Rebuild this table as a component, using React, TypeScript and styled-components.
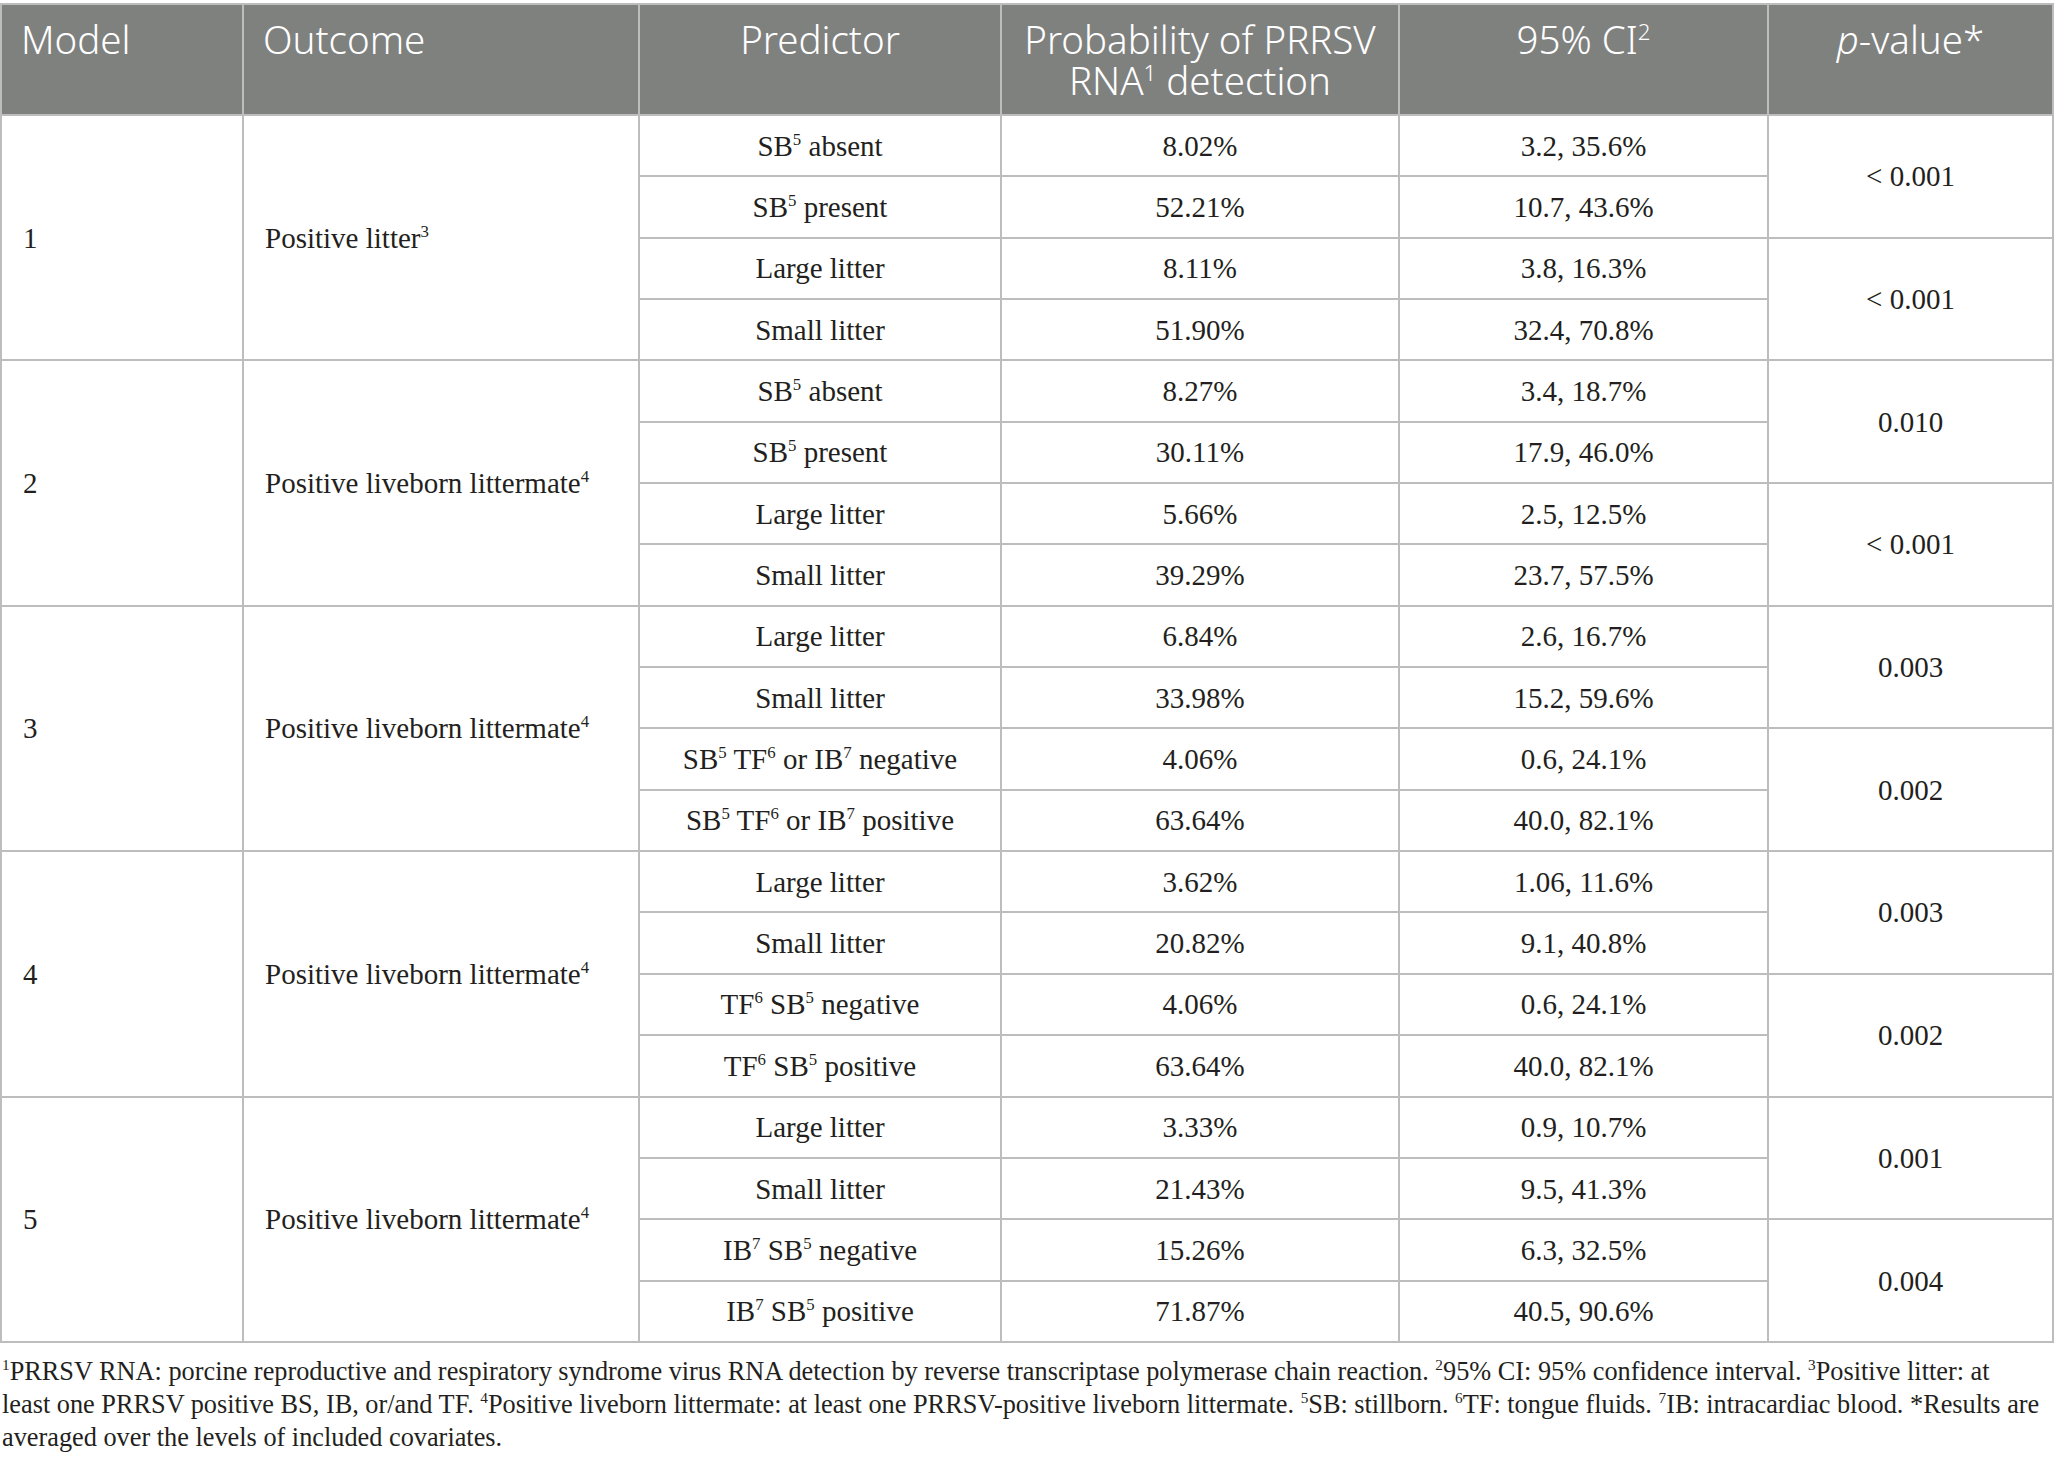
import React from "react";
import styled, { createGlobalStyle } from "styled-components";

const GlobalStyle = createGlobalStyle`
  html, body {
    margin: 0;
    padding: 0;
    background: #ffffff;
  }
  body {
    font-family: "Liberation Serif", "Times New Roman", serif;
    color: #231f20;
  }
`;

const Page = styled.div`
  width: 2055px;
  padding-top: 3px;
`;

const Table = styled.table`
  width: 2054px;
  border-collapse: collapse;
  table-layout: fixed;
  border: 2px solid #bdbdbd;
`;

const HeadRow = styled.tr`
  height: 111px;
  background: #7f817f;
`;

const HeadCell = styled.th<{ $align?: "left" | "center" }>`
  vertical-align: top;
  padding: 14px ${(p) => (p.$align === "left" ? "20px 0 19px" : "2px 0 2px")};
  text-align: ${(p) => p.$align || "center"};
  font-family: "Noto Sans", "Open Sans", sans-serif;
  font-weight: 300;
  font-size: 38.5px;
  line-height: 41px;
  color: #ffffff;
  border: 2px solid #bdbdbd;
  border-top: none;
  white-space: nowrap;
`;

const Row = styled.tr`
  height: 61.35px;
`;

const Cell = styled.td<{ $align?: "left" | "center" }>`
  padding: 0 ${(p) => (p.$align === "left" ? "10px 0 21px" : "6px")};
  text-align: ${(p) => p.$align || "center"};
  vertical-align: middle;
  font-size: 29px;
  line-height: 32px;
  border: 2px solid #bdbdbd;
  white-space: nowrap;
`;

const Sup = styled.sup`
  font-size: 0.58em;
  vertical-align: super;
  line-height: 0;
`;

const Italic = styled.i`
  font-style: italic;
`;

const Notes = styled.div`
  margin-top: 12px;
  padding: 0 6px 0 2px;
  font-size: 26.3px;
  line-height: 33px;
`;

const NoteLine = styled.div`
  white-space: nowrap;
`;

// "^5" -> superscript 5
function Txt({ s }: { s: string }) {
  const parts = s.split(/\^(\d)/);
  return (
    <>
      {parts.map((p, i) => (i % 2 ? <Sup key={i}>{p}</Sup> : <React.Fragment key={i}>{p}</React.Fragment>))}
    </>
  );
}

type Group = {
  model: string;
  outcome: string;
  rows: [string, string, string][];
  p: [string, string];
};

const groups: Group[] = [
  {
    model: "1",
    outcome: "Positive litter^3",
    rows: [
      ["SB^5 absent", "8.02%", "3.2, 35.6%"],
      ["SB^5 present", "52.21%", "10.7, 43.6%"],
      ["Large litter", "8.11%", "3.8, 16.3%"],
      ["Small litter", "51.90%", "32.4, 70.8%"],
    ],
    p: ["< 0.001", "< 0.001"],
  },
  {
    model: "2",
    outcome: "Positive liveborn littermate^4",
    rows: [
      ["SB^5 absent", "8.27%", "3.4, 18.7%"],
      ["SB^5 present", "30.11%", "17.9, 46.0%"],
      ["Large litter", "5.66%", "2.5, 12.5%"],
      ["Small litter", "39.29%", "23.7, 57.5%"],
    ],
    p: ["0.010", "< 0.001"],
  },
  {
    model: "3",
    outcome: "Positive liveborn littermate^4",
    rows: [
      ["Large litter", "6.84%", "2.6, 16.7%"],
      ["Small litter", "33.98%", "15.2, 59.6%"],
      ["SB^5 TF^6 or IB^7 negative", "4.06%", "0.6, 24.1%"],
      ["SB^5 TF^6 or IB^7 positive", "63.64%", "40.0, 82.1%"],
    ],
    p: ["0.003", "0.002"],
  },
  {
    model: "4",
    outcome: "Positive liveborn littermate^4",
    rows: [
      ["Large litter", "3.62%", "1.06, 11.6%"],
      ["Small litter", "20.82%", "9.1, 40.8%"],
      ["TF^6 SB^5 negative", "4.06%", "0.6, 24.1%"],
      ["TF^6 SB^5 positive", "63.64%", "40.0, 82.1%"],
    ],
    p: ["0.003", "0.002"],
  },
  {
    model: "5",
    outcome: "Positive liveborn littermate^4",
    rows: [
      ["Large litter", "3.33%", "0.9, 10.7%"],
      ["Small litter", "21.43%", "9.5, 41.3%"],
      ["IB^7 SB^5 negative", "15.26%", "6.3, 32.5%"],
      ["IB^7 SB^5 positive", "71.87%", "40.5, 90.6%"],
    ],
    p: ["0.001", "0.004"],
  },
];

// footnote, broken where the printed table breaks it
const notes = [
  "^1PRRSV RNA: porcine reproductive and respiratory syndrome virus RNA detection by reverse transcriptase polymerase chain reaction. ^295% CI: 95% confidence interval. ^3Positive litter: at",
  "least one PRRSV positive BS, IB, or/and TF. ^4Positive liveborn littermate: at least one PRRSV-positive liveborn littermate. ^5SB: stillborn. ^6TF: tongue fluids. ^7IB: intracardiac blood. *Results are",
  "averaged over the levels of included covariates.",
];

export default function App() {
  return (
    <Page>
      <GlobalStyle />
      <Table>
        <colgroup>
          <col style={{ width: 242 }} />
          <col style={{ width: 396 }} />
          <col style={{ width: 362 }} />
          <col style={{ width: 398 }} />
          <col style={{ width: 369 }} />
          <col />
        </colgroup>
        <thead>
          <HeadRow>
            <HeadCell $align="left">Model</HeadCell>
            <HeadCell $align="left">Outcome</HeadCell>
            <HeadCell>Predictor</HeadCell>
            <HeadCell>
              Probability of PRRSV
              <br />
              RNA<Sup>1</Sup> detection
            </HeadCell>
            <HeadCell>
              95% CI<Sup>2</Sup>
            </HeadCell>
            <HeadCell>
              <Italic>p</Italic>-value*
            </HeadCell>
          </HeadRow>
        </thead>
        <tbody>
          {groups.map((g) =>
            g.rows.map((r, i) => (
              <Row key={g.model + "-" + i}>
                {i === 0 && (
                  <>
                    <Cell $align="left" rowSpan={4}>
                      {g.model}
                    </Cell>
                    <Cell $align="left" rowSpan={4}>
                      <Txt s={g.outcome} />
                    </Cell>
                  </>
                )}
                <Cell>
                  <Txt s={r[0]} />
                </Cell>
                <Cell>{r[1]}</Cell>
                <Cell>{r[2]}</Cell>
                {i % 2 === 0 && <Cell rowSpan={2}>{g.p[i / 2]}</Cell>}
              </Row>
            ))
          )}
        </tbody>
      </Table>
      <Notes>
        {notes.map((n, i) => (
          <NoteLine key={i}>
            <Txt s={n} />
          </NoteLine>
        ))}
      </Notes>
    </Page>
  );
}
